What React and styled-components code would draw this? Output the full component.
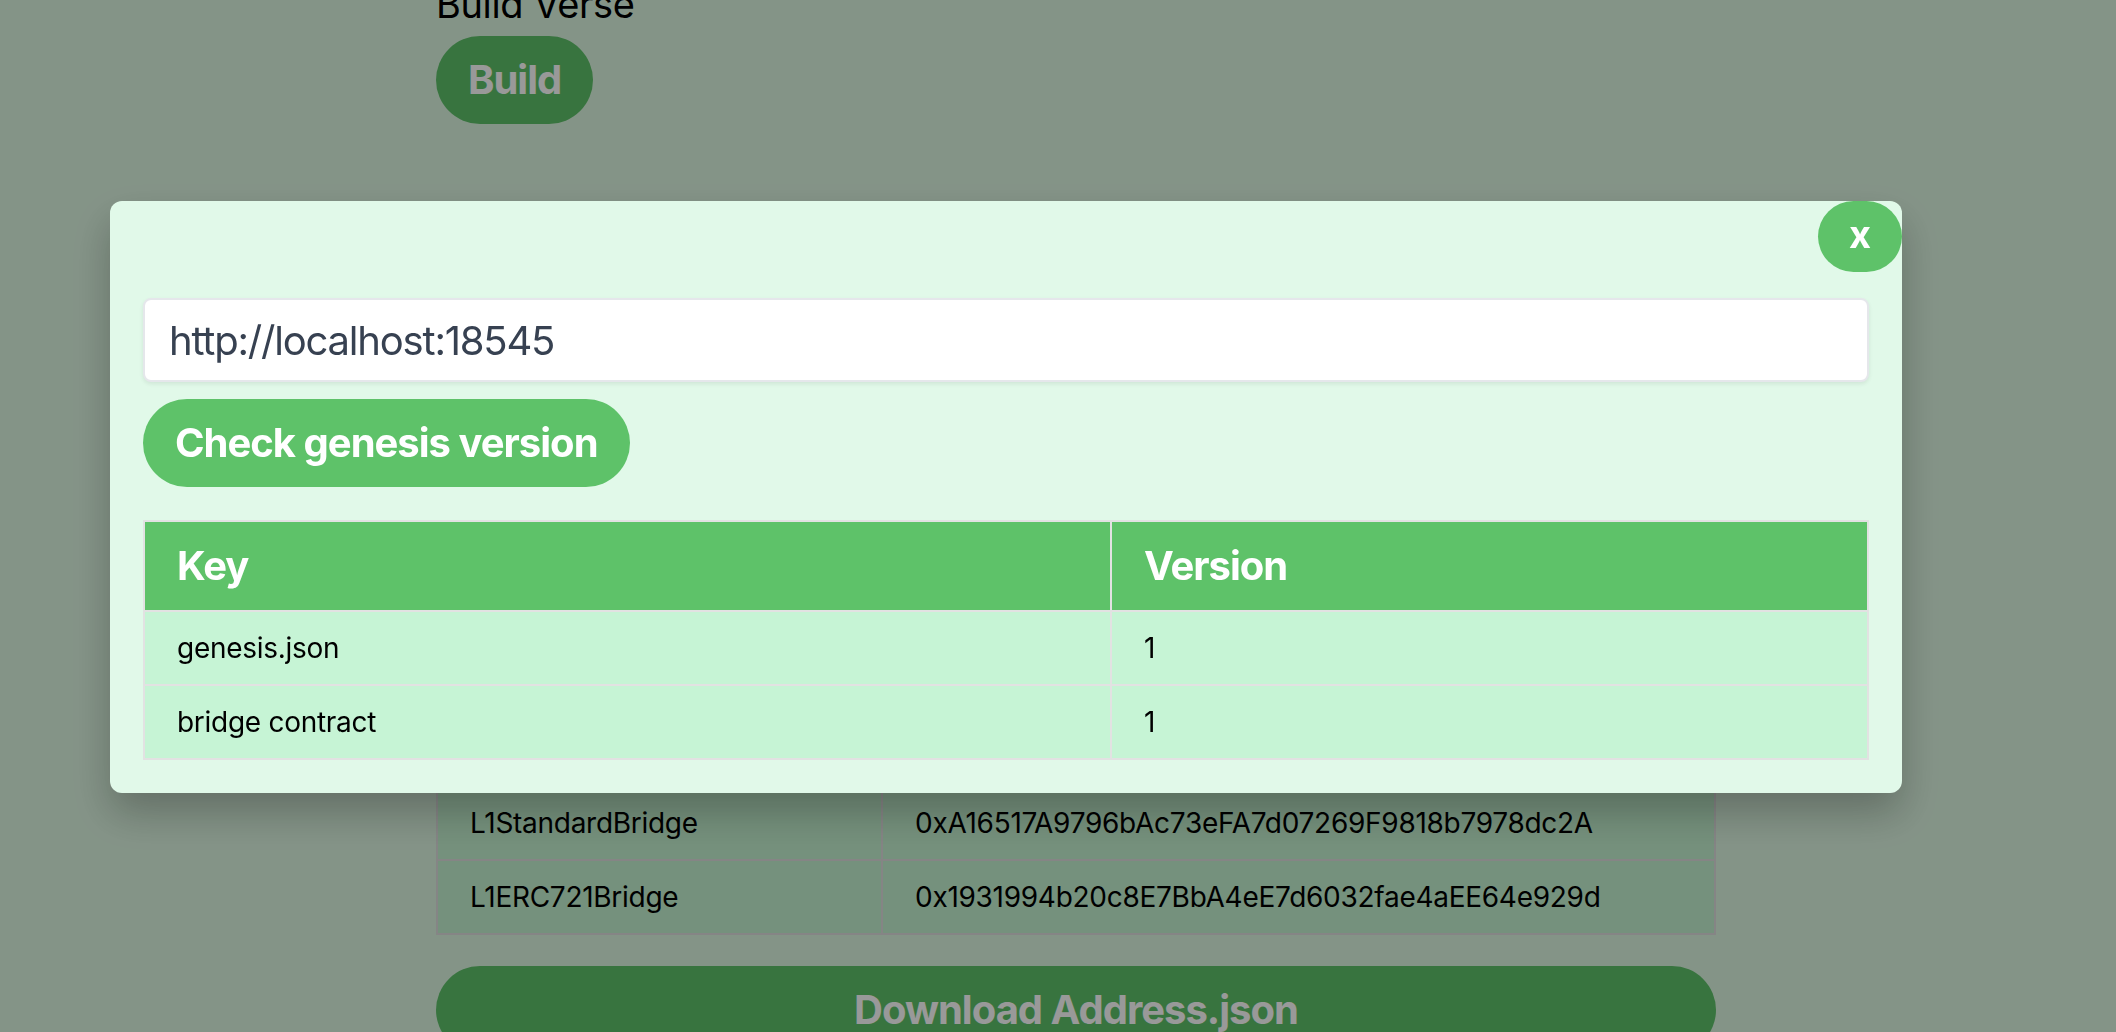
import styled, { createGlobalStyle } from 'styled-components';

const GlobalStyle = createGlobalStyle`
  html, body {
    margin: 0;
    padding: 0;
    overflow: hidden;
    background: #ddf7e2;
    font-family: Inter, "Liberation Sans", sans-serif;
  }
  * {
    box-sizing: border-box;
  }
`;

const genesisRows = [
  { key: 'genesis.json', version: '1' },
  { key: 'bridge contract', version: '1' },
];

const addressRows = [
  { name: 'L1StandardBridge', address: '0xA16517A9796bAc73eFA7d07269F9818b7978dc2A' },
  { name: 'L1ERC721Bridge', address: '0x1931994b20c8E7BbA4eE7d6032fae4aEE64e929d' },
];

export default function App() {
  return (
    <>
      <GlobalStyle />
      <Page>
        <Title>Build Verse</Title>
        <PillButton>Build</PillButton>

        <AddressTable>
          <tbody>
            {addressRows.map((row) => (
              <tr key={row.name}>
                <AddressCell $first>{row.name}</AddressCell>
                <AddressCell>{row.address}</AddressCell>
              </tr>
            ))}
          </tbody>
        </AddressTable>

        <PillButton $wide>Download Address.json</PillButton>
      </Page>

      <Overlay>
        <Modal>
          <CloseButton>x</CloseButton>
          <UrlInput defaultValue="http://localhost:18545" />
          <CheckButton>Check genesis version</CheckButton>

          <VersionTable>
            <thead>
              <tr>
                <HeadCell $first>Key</HeadCell>
                <HeadCell>Version</HeadCell>
              </tr>
            </thead>
            <tbody>
              {genesisRows.map((row) => (
                <tr key={row.key}>
                  <BodyCell>{row.key}</BodyCell>
                  <BodyCell>{row.version}</BodyCell>
                </tr>
              ))}
            </tbody>
          </VersionTable>
        </Modal>
      </Overlay>
    </>
  );
}

const Page = styled.div`
  display: flex;
  flex-direction: column;
  align-items: flex-start;
  width: 1280px;
  margin-left: 436px;
  margin-top: -19px;
`

const Title = styled.div`
  font-size: 38px;
  line-height: 46px;
  color: #000;
  letter-spacing: -0.01em;
  margin-bottom: 9px;
`

const PillButton = styled.button`
  width: ${(p) => (p.$wide ? '100%' : 'auto')};
  margin-top: ${(p) => (p.$wide ? '31px' : '0')};
  padding: 16px 32px;
  border: none;
  border-radius: 9999px;
  background: #5ec269;
  color: #fff;
  font-family: inherit;
  font-size: 40px;
  line-height: 56px;
  font-weight: 700;
  letter-spacing: -0.025em;
`

const AddressTable = styled.table`
  width: 100%;
  margin-top: 661px;
  border-collapse: collapse;
  border: 2px solid #dedede;
`

const AddressCell = styled.td`
  width: ${(p) => (p.$first ? '445px' : 'auto')};
  padding: 16px 32px;
  border: 2px solid #dedede;
  background: #c4f2d0;
  color: #000;
  font-size: 28px;
  line-height: 40px;
  letter-spacing: -0.01em;
`

const Overlay = styled.div`
  position: fixed;
  inset: 0;
  background: rgba(0, 0, 0, 0.4);
  padding: 201px 0 0 110px;
`

const Modal = styled.div`
  position: relative;
  width: 1792px;
  padding: 97px 33px 33px;
  border-radius: 12px;
  background: #e1f9e9;
  box-shadow: 0 20px 40px rgba(0, 0, 0, 0.25);
`

const CloseButton = styled.button`
  position: absolute;
  top: 0;
  right: 0;
  width: 84px;
  height: 71px;
  border: none;
  border-radius: 9999px;
  background: #5ec269;
  color: #fff;
  font-family: inherit;
  font-size: 38px;
  font-weight: 700;
  line-height: 1;
  padding: 0 0 6px;
`

const UrlInput = styled.input`
  display: block;
  width: 100%;
  height: 84px;
  padding: 0 24px;
  border: 2px solid #e5e7eb;
  border-radius: 8px;
  background: #fff;
  box-shadow: 0 2px 4px rgba(0, 0, 0, 0.08);
  color: #374151;
  font-family: inherit;
  font-size: 40px;
  letter-spacing: -0.03em;
  outline: none;
`

const CheckButton = styled(PillButton)`
  margin-top: 17px;
`

const VersionTable = styled.table`
  width: 100%;
  margin-top: 33px;
  border-collapse: collapse;
  border: 2px solid #e2e2e2;
`

const HeadCell = styled.th`
  width: ${(p) => (p.$first ? '967px' : 'auto')};
  padding: 16px 32px;
  border: 2px solid #e2e2e2;
  background: #5ec269;
  color: #fff;
  text-align: left;
  font-size: 40px;
  line-height: 56px;
  font-weight: 700;
  letter-spacing: -0.025em;
`

const BodyCell = styled.td`
  padding: 16px 32px;
  border: 2px solid #e2e2e2;
  background: #c6f4d5;
  color: #000;
  font-size: 28px;
  line-height: 40px;
  letter-spacing: -0.01em;
`
